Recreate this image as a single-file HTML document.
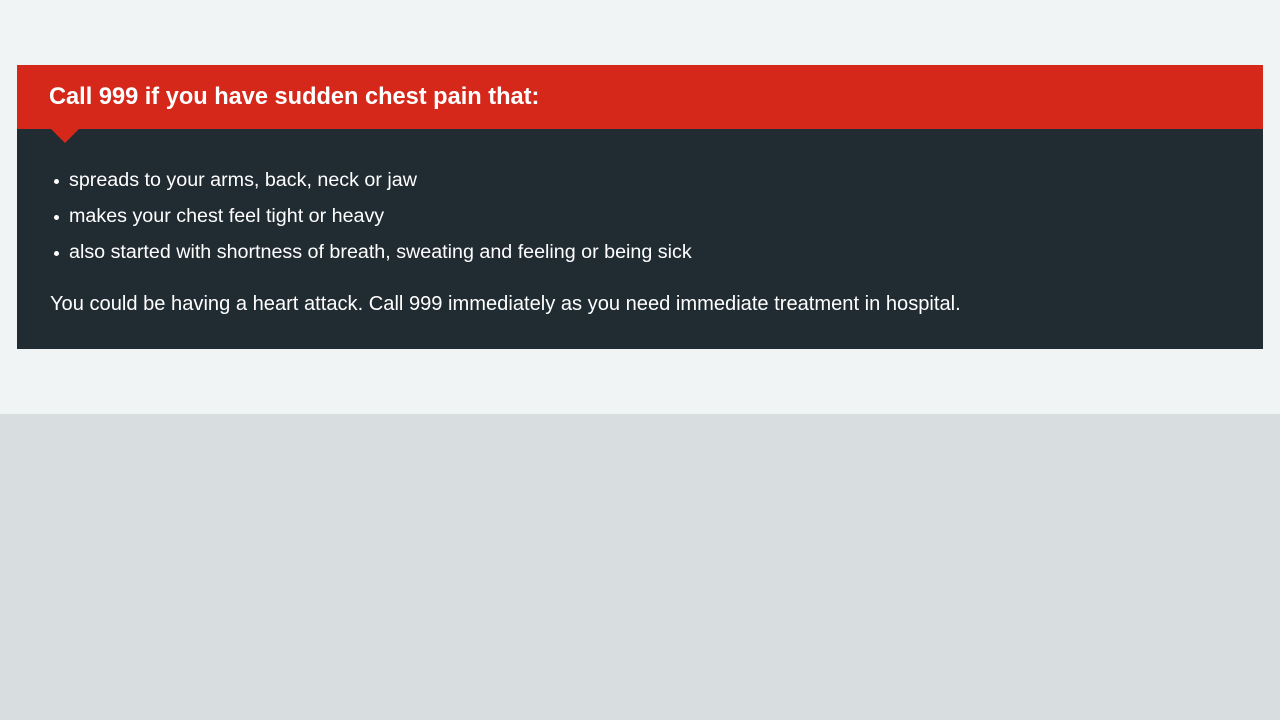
<!DOCTYPE html>
<html><head><style>
html,body{margin:0;padding:0;}
body{width:1280px;height:720px;background:#d8dde0;font-family:"Liberation Sans",sans-serif;position:relative;overflow:hidden;}
.top{position:absolute;left:0;top:0;width:1280px;height:414px;background:#f0f4f5;}
.card{position:absolute;left:17px;top:65px;width:1246px;}
.head{background:#d5281b;height:64px;position:relative;z-index:2;}
.head h2{margin:0;position:absolute;left:32px;top:18px;color:#fff;font-size:23.6px;font-weight:bold;line-height:28px;}
.tri{position:absolute;left:34px;top:64px;width:0;height:0;border-left:14px solid transparent;border-right:14px solid transparent;border-top:14px solid #d5281b;}
.body{background:#212b32;height:220px;color:#fff;font-size:19.7px;position:relative;z-index:1;}
.li{position:absolute;left:52px;line-height:24px;}
.li:before{content:"";position:absolute;left:-15px;top:11px;width:5px;height:5px;border-radius:50%;background:#fff;}
.p{position:absolute;left:33px;top:163px;line-height:24px;font-size:20.1px;}
</style></head><body>
<div class="top"></div>
<div class="card">
<div class="head"><h2>Call 999 if you have sudden chest pain that:</h2><div class="tri"></div></div>
<div class="body">
<div class="li" style="top:39px">spreads to your arms, back, neck or jaw</div>
<div class="li" style="top:75px">makes your chest feel tight or heavy</div>
<div class="li" style="top:111px">also started with shortness of breath, sweating and feeling or being sick</div>
<div class="p">You could be having a heart attack. Call 999 immediately as you need immediate treatment in hospital.</div>
</div>
</div>
</body></html>
